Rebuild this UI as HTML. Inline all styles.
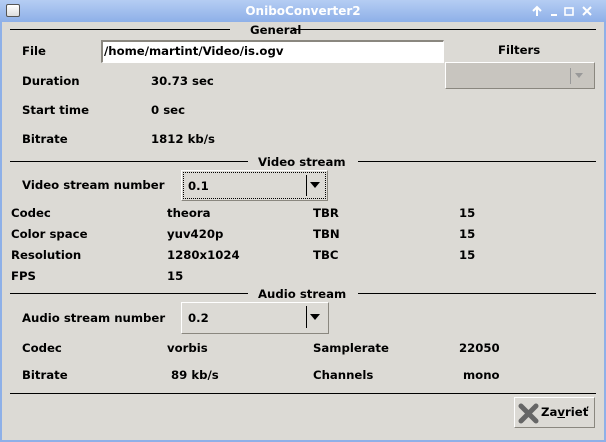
<!DOCTYPE html>
<html><head><style>
*{margin:0;padding:0;box-sizing:border-box}
body{width:606px;height:442px;overflow:hidden;background:#dcdad5;font-family:"DejaVu Sans","Liberation Sans",sans-serif;font-weight:bold;font-size:11.7px;color:#000;position:relative}
.tb{position:absolute;left:0;top:0;width:606px;height:22px;background:linear-gradient(#b5cdf3,#8eb0e8);}
.frame{position:absolute;left:0;top:22px;width:606px;height:420px;border:2px solid #8eb0e8;border-top:none}
.t{position:absolute;white-space:nowrap;line-height:14px}
.ln{position:absolute;height:1px;background:#000}
.combo{position:absolute;background:#dcdad5;border:1px solid #fff;border-right-color:#8a877f;border-bottom-color:#8a877f}
</style></head><body>
<div class="tb"></div>
<div class="frame"></div>
<div style="position:absolute;left:6px;top:4px;width:14px;height:13px;background:linear-gradient(#fff,#ddd);border:1px solid #555;border-radius:2px"></div>
<div class="t" style="left:0;width:606px;text-align:center;top:4px;color:#fff;font-size:12px">OniboConverter2</div>
<svg style="position:absolute;left:528px;top:4px" width="74" height="14" viewBox="0 0 74 14" fill="none" stroke="#fff" stroke-width="2">
<path d="M9 12V4M5 7l4-4 4 4"/>
<path d="M23 11h6"/>
<rect x="37" y="4" width="8" height="7" stroke-width="1.6"/>
<path d="M55 3l8 8M63 3l-8 8"/>
</svg>

<div class="ln" style="left:10px;top:29px;width:220px"></div>
<div class="t" style="left:250px;top:23px">General</div>
<div class="ln" style="left:293px;top:29px;width:303px"></div>

<div class="t" style="left:22px;top:44px">File</div>
<div style="position:absolute;left:101px;top:40px;width:343px;height:23px;background:#fff;border:1px solid #8a877f;border-right-color:#fff;border-bottom-color:#fff;border-width:2px 1px 1px 2px"></div>
<div class="t" style="left:104px;top:44px">/home/martint/Video/is.ogv</div>
<div class="t" style="left:498px;top:43px">Filters</div>
<div class="combo" style="left:445px;top:62px;width:150px;height:27px;background:#c8c5bf;border-color:#fff #8a877f #8a877f #fff"></div>
<div style="position:absolute;left:570px;top:68px;width:1px;height:16px;background:#999"></div>
<div style="position:absolute;left:575px;top:73px;border:4px solid transparent;border-top:5px solid #999"></div>

<div class="t" style="left:22px;top:74px">Duration</div><div class="t" style="left:151px;top:74px">30.73 sec</div>
<div class="t" style="left:22px;top:103px">Start time</div><div class="t" style="left:151px;top:103px">0 sec</div>
<div class="t" style="left:22px;top:132px">Bitrate</div><div class="t" style="left:151px;top:132px">1812 kb/s</div>

<div class="ln" style="left:10px;top:161px;width:238px"></div>
<div class="t" style="left:258px;top:155px">Video stream</div>
<div class="ln" style="left:358px;top:161px;width:238px"></div>

<div class="t" style="left:22px;top:178px">Video stream number</div>
<div class="combo" style="left:181px;top:170px;width:147px;height:31px"></div>
<div style="position:absolute;left:183px;top:172px;width:143px;height:27px;border:1px dotted #000"></div>
<div class="t" style="left:188px;top:179px">0.1</div>
<div style="position:absolute;left:306px;top:175px;width:1px;height:21px;background:#000"></div>
<div style="position:absolute;left:310px;top:182px;border:5px solid transparent;border-top:6px solid #000"></div>

<div class="t" style="left:11px;top:206px">Codec</div><div class="t" style="left:167px;top:206px">theora</div><div class="t" style="left:313px;top:206px">TBR</div><div class="t" style="left:459px;top:206px">15</div>
<div class="t" style="left:11px;top:227px">Color space</div><div class="t" style="left:167px;top:227px">yuv420p</div><div class="t" style="left:313px;top:227px">TBN</div><div class="t" style="left:459px;top:227px">15</div>
<div class="t" style="left:11px;top:248px">Resolution</div><div class="t" style="left:167px;top:248px">1280x1024</div><div class="t" style="left:313px;top:248px">TBC</div><div class="t" style="left:459px;top:248px">15</div>
<div class="t" style="left:11px;top:269px">FPS</div><div class="t" style="left:167px;top:269px">15</div>

<div class="ln" style="left:10px;top:293px;width:238px"></div>
<div class="t" style="left:258px;top:287px">Audio stream</div>
<div class="ln" style="left:358px;top:293px;width:238px"></div>

<div class="t" style="left:22px;top:311px">Audio stream number</div>
<div class="combo" style="left:181px;top:302px;width:148px;height:32px"></div>
<div class="t" style="left:188px;top:311px">0.2</div>
<div style="position:absolute;left:306px;top:306px;width:1px;height:22px;background:#000"></div>
<div style="position:absolute;left:310px;top:314px;border:5px solid transparent;border-top:6px solid #000"></div>

<div class="t" style="left:22px;top:341px">Codec</div><div class="t" style="left:167px;top:341px">vorbis</div><div class="t" style="left:313px;top:341px">Samplerate</div><div class="t" style="left:459px;top:341px">22050</div>
<div class="t" style="left:22px;top:368px">Bitrate</div><div class="t" style="left:171px;top:368px">89 kb/s</div><div class="t" style="left:313px;top:368px">Channels</div><div class="t" style="left:463px;top:368px">mono</div>

<div class="ln" style="left:10px;top:393px;width:586px"></div>
<div class="combo" style="left:514px;top:397px;width:81px;height:31px"></div>
<svg style="position:absolute;left:518px;top:403px" width="21" height="21" viewBox="0 0 21 21"><path d="M3 3L18 18M18 3L3 18" stroke="#666" stroke-width="5" stroke-linecap="round"/></svg>
<div class="t" style="left:541px;top:405px">Za<u>v</u>rieť</div>
</body></html>
